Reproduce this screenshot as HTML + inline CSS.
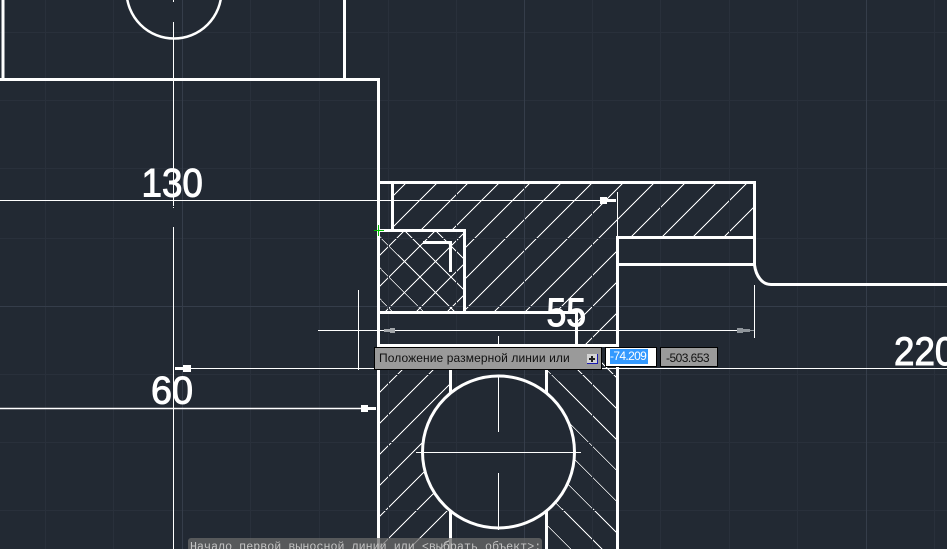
<!DOCTYPE html>
<html lang="ru">
<head>
<meta charset="utf-8">
<title>CAD</title>
<style>
html,body{margin:0;padding:0;background:#222933;}
#c{position:relative;width:947px;height:549px;overflow:hidden;background:#222933;}
svg{position:absolute;left:0;top:0;}
.box{position:absolute;box-sizing:border-box;border:1px solid #000;font:12px/1 "Liberation Sans",sans-serif;color:#111;white-space:nowrap;}
</style>
</head>
<body>
<div id="c">
<svg width="947" height="549" viewBox="0 0 947 549" xmlns="http://www.w3.org/2000/svg" font-family="Liberation Sans, sans-serif">
<defs>
<clipPath id="u"><polygon points="392,182 754,182 754,237 617,237 617,345 576,345 576,312 465,312 465,230 392,230"/></clipPath>
<clipPath id="x"><rect x="379" y="230" width="86" height="82"/></clipPath>
<clipPath id="l"><rect x="379" y="345" width="72" height="204"/></clipPath>
<clipPath id="r"><rect x="546" y="345" width="71" height="204"/></clipPath>
</defs>

<g stroke="#fff" stroke-width="0.71" fill="none" shape-rendering="crispEdges">
<path clip-path="url(#u)" d="M439 150L239 350M470 150L270 350M501 150L301 350M532 150L332 350M563 150L363 350M594 150L394 350M625 150L425 350M656 150L456 350M687 150L487 350M718 150L518 350M749 150L549 350M780 150L580 350M811 150L611 350"/>
<path clip-path="url(#x)" d="M384 220L284 320M415 220L315 320M446 220L346 320M477 220L377 320M508 220L408 320M539 220L439 320M301 220L401 320M332 220L432 320M363 220L463 320M394 220L494 320M425 220L525 320"/>
<path clip-path="url(#l)" d="M401 340L181 560M432 340L212 560M463 340L243 560M494 340L274 560M525 340L305 560M556 340L336 560M587 340L367 560M618 340L398 560M649 340L429 560"/>
<path clip-path="url(#r)" d="M331 340L551 560M362 340L582 560M393 340L613 560M424 340L644 560M455 340L675 560M486 340L706 560M517 340L737 560M548 340L768 560M579 340L799 560M610 340L830 560"/>
</g>

<circle cx="498.5" cy="452" r="76" fill="#222933"/>

<g stroke="#29303b" stroke-width="1" shape-rendering="crispEdges">
<path d="M45.5 0V549M113.5 0V549M250.5 0V549M319.5 0V549M388.5 0V549M456.5 0V549M592.5 0V549M660.5 0V549M729.5 0V549M797.5 0V549M934.5 0V549M0 32.5H947M0 100.5H947M0 168.5H947M0 238.5H947M0 374.5H947M0 442.5H947M0 510.5H947"/>
</g>
<g stroke="#353d4a" stroke-width="1" shape-rendering="crispEdges">
<path d="M182.5 0V549M524.5 0V549M866.5 0V549M0 306.5H947"/>
</g>

<g stroke="#fff" stroke-width="1" fill="none" shape-rendering="crispEdges">
<path d="M173.5 0V2M173.5 22V206M173.5 207V208M173.5 227V549"/>
<path d="M0 200.5H602"/>
<path d="M617.5 192V237"/>
<path d="M318 330.5H384M395 330.5H737"/>
<path d="M754.5 285V338"/>
<path d="M358.5 290V370"/>
<path d="M498.5 336V345"/>
<path d="M190 368.5H947"/>
<path d="M416 452.5H581"/>
<path d="M498.5 375V432M498.5 473V530"/>
</g>
<path d="M0 408.5H364" stroke="#fff" stroke-width="1.4" fill="none"/>

<g stroke="#fff" stroke-width="3" fill="none">
<path d="M3 0V79.5M344.5 0V79.5M0 79.5H380M378.5 78V549"/>
<path d="M377 182.5H756M754.5 181V266M392.5 182V230M377 230.5H466M464.5 229V313M377 312.5H578M576.5 311V346M377 345.5H619"/>
<path d="M616 237.5H756M617.5 236V549M616 264.5H756"/>
<path d="M423 242.5H452M450.5 241V272"/>
<path d="M754.5 265C756 276 762 284.500 771 284.500H947"/>
<path d="M450.500 345V393M546.500 345V393M450.500 510V549M546.500 510V549"/>
</g>
<circle cx="174" cy="-9" r="47.500" fill="none" stroke="#fff" stroke-width="2.500"/>
<circle cx="498.500" cy="452" r="76" fill="none" stroke="#fff" stroke-width="3"/>

<g fill="#fff" shape-rendering="crispEdges">
<polygon points="600,197 607,197 607,199 616,199 616,202 607,202 607,204 600,204"/>
<polygon points="361,405 368,405 368,407 376,407 376,410 368,410 368,412 361,412"/>
<polygon points="175,367 183,367 183,365 191,365 191,372 183,372 183,370 175,370"/>
</g>
<g fill="#a3a7ab" shape-rendering="crispEdges">
<polygon points="384,329 390,329 390,328 395,328 395,333 390,333 390,332 384,332"/>
</g>
<g fill="#8f959b" shape-rendering="crispEdges">
<polygon points="737,328 743,328 743,329 750,329 750,332 743,332 743,333 737,333"/>
<rect x="750" y="330" width="4" height="1"/>
</g>

<g fill="#fff" stroke="#fff" stroke-width="1" font-size="40">
<text transform="translate(141.500,196.500) scale(.92,1)">130</text>
<text transform="translate(151,403.500) scale(.97,1)" font-size="39">60</text>
<text transform="translate(546.500,326) scale(.89,1)">55</text>
<text transform="translate(894,365) scale(.92,1)">220</text>
</g>

<path d="M374 230.500H384M378.500 225V236" stroke="#00c000" stroke-width="1" fill="none" shape-rendering="crispEdges"/>
</svg>

<div class="box" style="left:374px;top:347px;width:228px;height:23px;background:#9a9a9a;padding:4px 0 0 4px;letter-spacing:.1px;">Положение размерной линии или</div>
<div style="position:absolute;left:587px;top:354px;width:10px;height:9px;background:#d4d4d4;border-bottom:1px solid #1a1ab0;border-right:1px solid #1a1ab0;box-sizing:content-box;"><div style="position:absolute;left:2px;top:4px;width:6px;height:2px;background:#222;"></div><div style="position:absolute;left:4px;top:2px;width:2px;height:6px;background:#222;"></div></div>

<div class="box" style="left:605px;top:347px;width:52px;height:20px;background:#fff;"></div>
<div style="position:absolute;left:610px;top:349px;width:38px;height:15px;background:#3399ff;color:#fff;font:12px/15px 'Liberation Sans',sans-serif;letter-spacing:-.65px;white-space:nowrap;">-74.209</div>
<div class="box" style="left:660px;top:347px;width:58px;height:20px;background:#9a9a9a;padding:4px 0 0 5px;letter-spacing:-.55px;">-503.653</div>

<div style="position:absolute;left:188px;top:538px;width:354px;height:14px;background:rgba(105,105,105,.75);border-radius:3px 3px 0 0;"></div>
<div style="position:absolute;left:190px;top:541px;color:#c4c4c4;font:11.67px/12px 'Liberation Mono',monospace;letter-spacing:.03px;white-space:nowrap;">Начало первой выносной линии или &lt;выбрать объект&gt;:</div>
</div>
</body>
</html>
